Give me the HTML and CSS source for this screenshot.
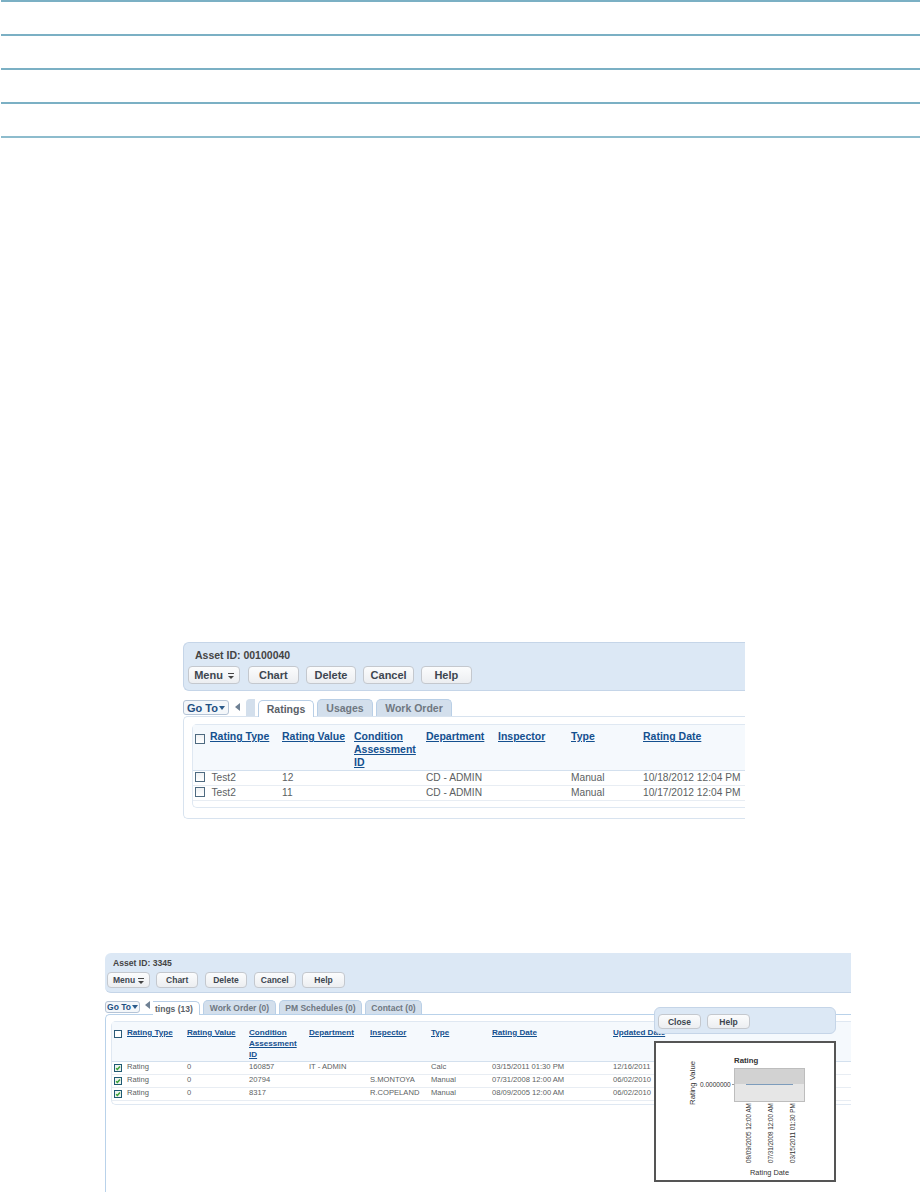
FILE: index.html
```html
<!DOCTYPE html>
<html lang="en">
<head>
<meta charset="utf-8">
<title>Asset ratings</title>
<link rel="stylesheet" href="styles.css">
</head>
<body>
<div class="rules">
  <div class="rule"></div><div class="rule"></div><div class="rule"></div><div class="rule"></div><div class="rule rule-last"></div>
</div>

<section class="shot shot-a">
  <header class="bar">
    <div class="asset">Asset ID: 00100040</div>
    <div class="buttons">
      <span class="btn btn-menu">Menu <i class="menu-ico"></i></span>
      <span class="btn">Chart</span>
      <span class="btn">Delete</span>
      <span class="btn">Cancel</span>
      <span class="btn">Help</span>
    </div>
  </header>
  <nav class="tabs">
    <span class="goto">Go To<i class="caret"></i></span>
    <i class="back"></i>
    <span class="stub"></span>
    <span class="tab tab-on t-ratings">Ratings</span>
    <span class="tab t-usages">Usages</span>
    <span class="tab t-work">Work Order</span>
  </nav>
  <div class="panel">
    <div class="inner">
      <table>
        <colgroup><col class="c0"><col class="c1"><col class="c2"><col class="c3"><col class="c4"><col class="c5"><col class="c6"><col class="c7"></colgroup>
        <thead><tr>
          <th><i class="box"></i></th><th><a>Rating Type</a></th><th><a>Rating Value</a></th><th><a>Condition<br>Assessment<br>ID</a></th><th><a>Department</a></th><th><a>Inspector</a></th><th><a>Type</a></th><th><a>Rating Date</a></th>
        </tr></thead>
        <tbody>
          <tr><td><i class="box"></i></td><td>Test2</td><td>12</td><td></td><td>CD - ADMIN</td><td></td><td>Manual</td><td>10/18/2012 12:04 PM</td></tr>
          <tr><td><i class="box"></i></td><td>Test2</td><td>11</td><td></td><td>CD - ADMIN</td><td></td><td>Manual</td><td>10/17/2012 12:04 PM</td></tr>
        </tbody>
      </table>
    </div>
  </div>
</section>

<section class="shot shot-b">
  <header class="bar">
    <div class="asset">Asset ID: 3345</div>
    <div class="buttons">
      <span class="btn btn-menu">Menu <i class="menu-ico"></i></span>
      <span class="btn">Chart</span>
      <span class="btn">Delete</span>
      <span class="btn">Cancel</span>
      <span class="btn">Help</span>
    </div>
  </header>
  <nav class="tabs">
    <span class="goto">Go To<i class="caret"></i></span>
    <i class="back"></i>
    <span class="tab tab-on tab-cut">tings (13)</span>
    <span class="tab t-work">Work Order (0)</span>
    <span class="tab t-pm">PM Schedules (0)</span>
    <span class="tab t-contact">Contact (0)</span>
  </nav>
  <div class="panel">
    <div class="inner">
      <table>
        <colgroup><col class="c0"><col class="c1"><col class="c2"><col class="c3"><col class="c4"><col class="c5"><col class="c6"><col class="c7"><col class="c8"></colgroup>
        <thead><tr>
          <th><i class="box"></i></th><th><a>Rating Type</a></th><th><a>Rating Value</a></th><th><a>Condition<br>Assessment<br>ID</a></th><th><a>Department</a></th><th><a>Inspector</a></th><th><a>Type</a></th><th><a>Rating Date</a></th><th><a>Updated Date</a></th>
        </tr></thead>
        <tbody>
          <tr><td><i class="box box-on"><svg viewBox="0 0 8 8"><path d="M1.5 4.2 3.2 6 6.6 2"/></svg></i></td><td>Rating</td><td>0</td><td>160857</td><td>IT - ADMIN</td><td></td><td>Calc</td><td>03/15/2011 01:30 PM</td><td>12/16/2011</td></tr>
          <tr><td><i class="box box-on"><svg viewBox="0 0 8 8"><path d="M1.5 4.2 3.2 6 6.6 2"/></svg></i></td><td>Rating</td><td>0</td><td>20794</td><td></td><td>S.MONTOYA</td><td>Manual</td><td>07/31/2008 12:00 AM</td><td>06/02/2010</td></tr>
          <tr><td><i class="box box-on"><svg viewBox="0 0 8 8"><path d="M1.5 4.2 3.2 6 6.6 2"/></svg></i></td><td>Rating</td><td>0</td><td>8317</td><td></td><td>R.COPELAND</td><td>Manual</td><td>08/09/2005 12:00 AM</td><td>06/02/2010</td></tr>
        </tbody>
      </table>
    </div>
  </div>

  <aside class="popup">
    <div class="popup-bar">
      <span class="btn">Close</span>
      <span class="btn">Help</span>
    </div>
    <svg class="chart" viewBox="0 0 178 137" width="178" height="137">
      <text class="c-title" x="78" y="20">Rating</text>
      <rect x="78" y="25" width="71" height="16" fill="#d2d2d2"/>
      <rect x="78" y="41" width="71" height="18" fill="#e6e6e6"/>
      <path d="M78 25.500H149M78.500 25V59M148.500 25V59M78 58.500H149" fill="none" stroke="#bdbdbd"/>
      <path d="M90 41.500H137" stroke="#7d9cbc" stroke-width="1"/>
      <path d="M76 41.500H78" stroke="#999"/>
      <text class="c-value" x="44" y="43.500">0.0000000</text>
      <text class="c-axis" transform="translate(39 62) rotate(-90)">Rating Value</text>
      <text class="c-label" transform="translate(95 120) rotate(-90)">08/09/2005 12:00 AM</text>
      <text class="c-label" transform="translate(116.500 120) rotate(-90)">07/31/2008 12:00 AM</text>
      <text class="c-label" transform="translate(139 120) rotate(-90)">03/15/2011 01:30 PM</text>
      <text class="c-date" x="94" y="132">Rating Date</text>
    </svg>
  </aside>
</section>
</body>
</html>
```
FILE: styles.css
```css
* { box-sizing: border-box; }
html, body { margin: 0; padding: 0; background: #fff; overflow: hidden; }
body {
  width: 920px;
  height: 1192px;
  font-family: "Liberation Sans", Arial, sans-serif;
  color: #555;
}

/* top ruled lines */
.rules { margin-left: 1px; }
.rule { height: 34px; border-top: 2px solid #7bb0c4; }
.rule-last { height: 2px; border-top-color: #8dbccd; }

/* shared component */
.shot { position: relative; overflow: hidden; }
.bar {
  background: #dce8f5;
  border: solid #c5d5e8;
  border-width: 1px 0 1px 1px;
  border-radius: 6px 0 0 6px;
}
.asset { font-weight: bold; color: #444; }
.buttons { display: flex; }
.btn {
  display: flex;
  align-items: center;
  justify-content: center;
  gap: 5px;
  background: linear-gradient(#fbfcfd, #eceef1);
  border: 1px solid #c4c8ce;
  border-radius: 4px;
  font-weight: bold;
  color: #3d4650;
  white-space: nowrap;
}
.menu-ico {
  display: block;
  width: 6px;
  height: 5px;
  border-top: 1px solid #444;
  position: relative;
}
.menu-ico::after {
  content: "";
  position: absolute;
  left: 0;
  top: 2px;
  border: 3px solid transparent;
  border-top-color: #444;
  border-bottom: 0;
}
.tabs { display: flex; align-items: flex-end; }
.goto {
  display: flex;
  align-items: center;
  justify-content: center;
  align-self: flex-start;
  background: #f4f7fa;
  border: 1px solid #b5c4d6;
  border-radius: 3px;
  font-weight: bold;
  color: #1f4f82;
}
.caret {
  display: block;
  margin-left: 1px;
  border: 3px solid transparent;
  border-top: 4px solid #2b5a8a;
  border-bottom: 0;
}
.back {
  display: block;
  align-self: flex-start;
  border: solid transparent;
  border-right-color: #6f8194;
}
.stub {
  background: #d3dfec;
  border-radius: 4px 0 0 0;
}
.tab {
  display: flex;
  align-items: center;
  justify-content: center;
  background: #d3dfec;
  border: 1px solid #b9cfe6;
  border-bottom: 0;
  border-radius: 5px 5px 0 0;
  font-weight: bold;
  color: #6f7781;
  white-space: nowrap;
}
.tab-on {
  background: #fff;
  color: #5a6168;
  margin-bottom: -1px;
  position: relative;
}
.panel {
  background: #fff;
  border: solid #d8e3ef;
  border-width: 1px 0 1px 1px;
  border-radius: 5px 0 0 5px;
}
.inner {
  border: solid #dfe8f2;
  border-width: 1px 0 1px 1px;
  border-radius: 5px 0 0 5px;
}
table { border-collapse: collapse; table-layout: fixed; }
th {
  background: #f5f9fd;
  border-bottom: 1px solid #d3e0ee;
  vertical-align: top;
  text-align: left;
  font-weight: bold;
  padding-left: 0;
  padding-right: 0;
}
th a { color: #14508f; text-decoration: underline; }
td { vertical-align: middle; border-bottom: 1px solid #e8edf3; padding: 0; color: #5c5f63; white-space: nowrap; }
td:first-child { padding-bottom: 0; }
.box {
  display: block;
  background: linear-gradient(#f0f2f4, #fff);
  border: 1px solid #4e6a80;
}
.box-on { border-color: #1f5a73; background: #eef3ee; }
.box-on svg { display: block; width: 100%; height: 100%; fill: none; stroke: #3aa238; stroke-width: 2; }

/* first shot */
.shot-a { margin: 504px 0 0 183px; width: 562px; height: 177px; font-size: 10.200px; }
.shot-a .bar { height: 49px; padding: 6px 0 0 4px; }
.shot-a .asset { font-size: 10.500px; line-height: 12px; margin-left: 7px; }
.shot-a .buttons { gap: 7px; margin-top: 5px; }
.shot-a .btn { width: 50.670px; height: 18px; font-size: 11px; }
.shot-a .btn-menu { width: 52px; margin-right: 1px; }
.shot-a .tabs { height: 26px; margin-top: -1px; }
.shot-a .goto { width: 46px; height: 15px; margin-top: 10px; font-size: 11px; }
.shot-a .back { border-width: 4px 5px 4px 0; margin: 13px 6px 0 6px; }
.shot-a .stub { width: 9px; height: 17px; margin-right: 3px; }
.shot-a .tab { height: 17px; margin-right: 3px; font-size: 10.500px; }
.shot-a .t-ratings, .shot-a .t-usages { width: 56px; }
.shot-a .t-work { width: 76px; }
.shot-a .panel { height: 103px; padding: 7px 0 0 8px; }
.shot-a .inner { height: 84px; }
.shot-a table { width: 552px; }
.shot-a .c0 { width: 17px; }
.shot-a .c1, .shot-a .c2, .shot-a .c3, .shot-a .c4 { width: 72px; }
.shot-a .c5 { width: 73px; }
.shot-a .c6 { width: 72px; }
.shot-a .c7 { width: 102px; }
.shot-a th { height: 45px; padding-top: 5px; line-height: 13px; font-size: 10.500px; }
.shot-a td { height: 15px; padding-bottom: 2px; font-size: 10.200px; }
.shot-a td:nth-child(2) { padding-left: 1.500px; }
.shot-a .box { width: 10px; height: 10px; margin-left: 2px; }
.shot-a th .box { margin-top: 4px; }

/* second shot */
.shot-b { margin: 134px 0 0 105px; width: 746px; height: 239px; font-size: 8.500px; }
.shot-b .bar { height: 40px; padding: 4px 0 0 2px; border-width: 0 0 1px 0; }
.shot-b .asset { font-size: 8.600px; line-height: 12px; margin-left: 6px; }
.shot-b .buttons { gap: 6.500px; margin-top: 3px; }
.shot-b .btn { width: 42.300px; height: 16px; font-size: 8.500px; }
.shot-b .btn-menu { width: 43px; gap: 3px; margin-right: -0.500px; }
.shot-b .tabs { height: 21px; }
.shot-b .goto { width: 35px; height: 12px; margin-top: 8px; font-size: 8.500px; }
.shot-b .back { border-width: 4px 5px 4px 0; margin: 8px 3px 0 5px; }
.shot-b .tab { height: 14px; margin-right: 3px; font-size: 8.500px; }
.shot-b .tab-cut { width: 47px; padding-left: 2px; justify-content: flex-start; border-left: 0; border-radius: 0 5px 0 0; }
.shot-b .t-work { width: 73px; }
.shot-b .t-pm { width: 83px; }
.shot-b .t-contact { width: 57px; }
.shot-b .panel { height: 190px; padding: 6px 0 0 5px; border-bottom: 0; border-radius: 5px 0 0 0; border-color: #b9d2ea; }
.shot-b .inner { height: 84px; }
.shot-b table { width: 739px; }
.shot-b .c0 { width: 15px; }
.shot-b .c1 { width: 60px; }
.shot-b .c2 { width: 62px; }
.shot-b .c3 { width: 60px; }
.shot-b .c4 { width: 61px; }
.shot-b .c5 { width: 61px; }
.shot-b .c6 { width: 61px; }
.shot-b .c7 { width: 121px; }
.shot-b .c8 { width: 238px; }
.shot-b th { height: 38px; padding-top: 5px; line-height: 11px; font-size: 8.100px; white-space: normal; }
.shot-b td { height: 13px; padding-bottom: 3px; font-size: 7.600px; }
.shot-b td:first-child { padding-bottom: 0; }
.shot-b .box { width: 8px; height: 8px; margin-left: 2px; }
.shot-b th .box { margin-top: 3px; border-color: #2b5a78; background: #fff; }

/* chart popup */
.popup { position: absolute; left: 549px; top: 54px; width: 182px; }
.popup-bar {
  display: flex;
  gap: 6px;
  height: 27px;
  padding: 6px 0 0 3px;
  background: #dce8f5;
  border: 1px solid #c5d5e8;
  border-radius: 6px;
}
.shot-b .popup-bar .btn { width: 43px; height: 15px; }
.chart {
  display: block;
  box-sizing: content-box;
  width: 178px;
  height: 137px;
  margin-top: 7px;
  background: #fff;
  border: 2px solid #555;
}
.chart text { font-family: "Liberation Sans", Arial, sans-serif; fill: #333; }
.c-title { font-size: 7.800px; font-weight: bold; }
.c-value { font-size: 6.500px; }
.c-label { font-size: 6.300px; }
.c-axis { font-size: 7.800px; }
.c-date { font-size: 7.400px; }
```
